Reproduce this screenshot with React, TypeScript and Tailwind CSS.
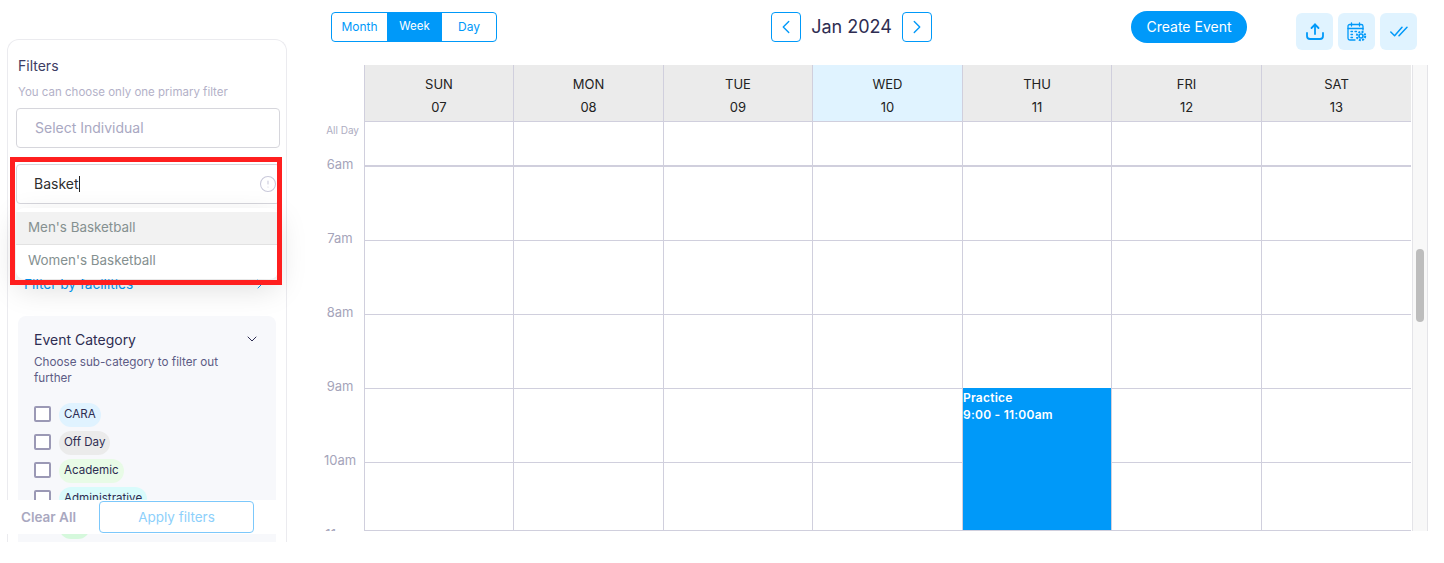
import { AlertCircle, ChevronDown, ChevronLeft, ChevronRight } from 'lucide-react';

const days = [
  { name: 'SUN', num: '07' },
  { name: 'MON', num: '08' },
  { name: 'TUE', num: '09' },
  { name: 'WED', num: '10', today: true },
  { name: 'THU', num: '11' },
  { name: 'FRI', num: '12' },
  { name: 'SAT', num: '13' },
];

const hours = ['6am', '7am', '8am', '9am', '10am', '11am'];

const categories = [
  { label: 'CARA', color: 'bg-[#e0f3ff]' },
  { label: 'Off Day', color: 'bg-[#ebebeb]' },
  { label: 'Academic', color: 'bg-[#e8fbe6]' },
  { label: 'Administrative', color: 'bg-[#d9fbfb]' },
  { label: 'Bus', color: 'bg-[#d5f8dc]' },
];

function UploadIcon() {
  return (
    <svg width="18" height="17" viewBox="0 0 18 17" fill="none" stroke="#0099f9" strokeWidth="1.8" strokeLinecap="round" strokeLinejoin="round">
      <path d="M9 11V1.5" />
      <path d="M5.5 5 9 1.5 12.5 5" />
      <path d="M1 10v3a3 3 0 0 0 3 3h10a3 3 0 0 0 3-3v-3" />
    </svg>
  );
}

function CalendarSettingsIcon() {
  return (
    <svg width="20" height="20" viewBox="0 0 20 20" fill="none" stroke="#0099f9" strokeLinecap="round" strokeLinejoin="round">
      <g strokeWidth="1.3">
        <path d="M8 18H2.8A1.8 1.8 0 0 1 1 16.2V4.3a1.8 1.8 0 0 1 1.8-1.8h11.4A1.8 1.8 0 0 1 16 4.3V8" />
        <path d="M4.5 .8v3.2M12.5 .8v3.2M1 6.5h15" />
        <path d="M4 9.5h1.5M4 12.5h1.5M4 15.5h1.5M8 9.5h1.5" />
      </g>
      <circle cx="14" cy="14" r="2" strokeWidth="1.6" />
      <circle cx="14" cy="14" r="4.2" strokeWidth="2" strokeDasharray="2 1.3" strokeLinecap="butt" />
    </svg>
  );
}

function DoubleCheckIcon() {
  return (
    <svg width="18" height="11" viewBox="0 0 18 11" fill="none" stroke="#0099f9" strokeWidth="1.5" strokeLinecap="round" strokeLinejoin="round">
      <path d="M.8 6 4.6 9.8 12 1.2" />
      <path d="M9 9.8 17 1.2" />
    </svg>
  );
}

function Sidebar() {
  return (
    <div className="relative ml-[7px] mt-[39px] h-[503px] w-[280px] shrink-0">
      <div className="h-full overflow-hidden rounded-t-xl border-x border-t border-[#ebebef] px-2">
        <div className="mt-4 px-[2px] text-sm leading-5 text-[#3d3c63]">Filters</div>
        <div className="mt-[8px] whitespace-nowrap px-[2px] text-[11.5px] leading-4 text-[#b3b1c8]">You can choose only one primary filter</div>
        <div className="mt-2 flex h-10 w-[264px] items-center rounded border border-[#d6d6dc] pl-[18px] text-sm text-[#a9a8c2]">
          Select Individual
        </div>
        <div className="mt-4 flex h-10 w-[264px] items-center justify-between rounded border border-[#d6d6dc] pl-[17px] pr-[2px] text-sm text-[#2f2f2f]">
          <span className="border-r border-[#222] leading-4">Basket</span>
          <AlertCircle size={18} strokeWidth={1.4} className="text-[#c9c9da]" />
        </div>
        <div className="mt-[70px] flex h-5 items-center justify-between pl-2 pr-[10px] text-[13.7px] text-[#0099f9]">
          <span>Filter by facilities</span>
          <ChevronRight size={16} strokeWidth={1.5} />
        </div>
        <div className="ml-[2px] mt-[22px] w-[258px] rounded-lg bg-[#f7f8fb] px-4 pb-10 pt-[14px]">
          <div className="flex items-center justify-between">
            <span className="text-sm leading-5 text-[#2e2d52]">Event Category</span>
            <ChevronDown size={16} strokeWidth={1.5} className="-translate-y-[1px] text-[#2e2d52]" />
          </div>
          <div className="mt-[4px] max-w-[195px] text-[11.7px] leading-4 text-[#5d5c85]">Choose sub-category to filter out further</div>
          <div className="mt-[17px] flex flex-col gap-1">
            {categories.map((c) => (
              <div key={c.label} className="flex h-6 items-center gap-2">
                <span className="h-4 w-[17px] -translate-y-[1px] rounded-[2px] border-2 border-[#9b99b5] bg-white" />
                <span className={`flex h-6 items-center rounded-full px-[5px] text-[11.6px] text-[#2e2d52] ${c.color}`}>{c.label}</span>
              </div>
            ))}
          </div>
        </div>
      </div>

      {/* typeahead results */}
      <div className="absolute left-[9px] top-[169px] w-[262px] rounded-lg bg-white pb-[3px] pt-[4px] text-[13.4px] text-[#859090] shadow-[0_10px_30px_rgba(0,0,0,0.13)]">
        <div className="flex h-[33px] items-center border-b border-[#e2e2e2] bg-[#f2f2f2] pb-[1px] pl-3">Men's Basketball</div>
        <div className="flex h-[31px] items-center pl-3">Women's Basketball</div>
      </div>

      {/* highlight from the screenshot */}
      <div className="pointer-events-none absolute left-[3px] top-[118px] h-[128px] w-[272px] border-[5px] border-[#ff1f1f]" />

      <div className="absolute left-[-7px] top-[461px] flex h-[34px] w-[286px] items-center bg-white">
        <span className="ml-[21px] text-[13.5px] font-semibold text-[#a9a8c0]">Clear All</span>
        <button className="ml-[23px] h-8 w-[155px] rounded border border-[#7cc8fb] text-[13.5px] text-[#8dd0fb]">Apply filters</button>
      </div>
    </div>
  );
}

function Toolbar() {
  return (
    <div className="flex h-[65px] items-start pl-[11px]">
      <div className="mt-3 flex h-[30px] w-[166px] overflow-hidden rounded border border-[#0099f9] text-xs text-[#0099f9]">
        <span className="flex w-[55px] items-center justify-center">Month</span>
        <span className="flex w-[55px] items-center justify-center bg-[#0099f9] text-[11.5px] text-white">Week</span>
        <span className="flex flex-1 items-center justify-center">Day</span>
      </div>
      <div className="ml-[274px] mt-3 flex items-center">
        <button className="flex size-[30px] items-center justify-center rounded border border-[#0099f9] text-[#0099f9]">
          <ChevronLeft size={22} strokeWidth={1.5} />
        </button>
        <span className="mx-[10px] w-[81px] text-center text-lg leading-[30px] text-[#2e2d52]">Jan 2024</span>
        <button className="flex size-[30px] items-center justify-center rounded border border-[#0099f9] text-[#0099f9]">
          <ChevronRight size={22} strokeWidth={1.5} />
        </button>
      </div>
      <button className="ml-[199px] mt-[11px] h-8 w-[116px] rounded-full bg-[#0099f9] text-sm text-white">Create Event</button>
      <div className="ml-[49px] mt-[13px] flex gap-[5px]">
        <button className="flex size-[37px] items-center justify-center rounded-md bg-[#e0f3ff]"><UploadIcon /></button>
        <button className="flex size-[37px] items-center justify-center rounded-md bg-[#e0f3ff]"><CalendarSettingsIcon /></button>
        <button className="flex size-[37px] items-center justify-center rounded-md bg-[#e0f3ff]"><DoubleCheckIcon /></button>
      </div>
    </div>
  );
}

function Calendar() {
  return (
    <div className="flex h-[466px] overflow-hidden">
      <div className="relative w-[1092px] shrink-0 overflow-hidden">
        <div className="ml-[44px] grid h-[57px] w-[1047px] grid-cols-[149px_150px_149px_150px_149px_150px_150px] border-b border-[#d0cfdd] text-[13px] leading-[23px] text-[#222]">
          {days.map((d) => (
            <div key={d.name} className={`flex flex-col items-center justify-center border-l border-[#d0cfdd] pt-[6px] ${d.today ? 'bg-[#e0f3ff]' : 'bg-[#ebebeb]'}`}>
              <span>{d.name}</span>
              <span>{d.num}</span>
            </div>
          ))}
        </div>
        <div className="flex h-[45px]">
          <div className="flex w-[44px] shrink-0 justify-end whitespace-nowrap pr-[5px] pt-[2px] text-[10px] leading-3 text-[#aeadc2]">All Day</div>
          <div className="grid w-[1047px] grid-cols-[149px_150px_149px_150px_149px_150px_150px] border-b-2 border-[#d0cfdd]">
            {days.map((d) => <div key={d.name} className="border-l border-[#d0cfdd]" />)}
          </div>
        </div>
        {hours.map((h) => (
          <div key={h} className="flex h-[74px]">
            <div className="flex w-[44px] shrink-0 -translate-y-[11px] justify-center pr-[4px] text-[13px] leading-4 text-[#a5a4ba]">{h}</div>
            <div className="grid w-[1047px] grid-cols-[149px_150px_149px_150px_149px_150px_150px] border-b border-[#d0cfdd]">
              {days.map((d) => (
                <div key={d.name} className="relative border-l border-[#d0cfdd]">
                  {h === '9am' && d.name === 'THU' && (
                    <div className="absolute inset-x-0 top-[-1px] z-10 h-[149px] bg-[#0099f9] text-xs font-semibold leading-[17px] tracking-[0.02em] text-white">
                      <div className="pt-[1px]">Practice</div>
                      <div>9:00 - 11:00am</div>
                    </div>
                  )}
                </div>
              ))}
            </div>
          </div>
        ))}
        {/* bottom edge of the scroll area */}
        <div className="absolute bottom-0 left-[44px] z-20 h-px w-[1047px] bg-[#d0cfdd]" />
      </div>
      <div className="w-4 shrink-0 border-x border-[#e4e4e8] bg-[#f8f8f8] px-[3px] pt-[184px]">
        <div className="h-[73px] w-2 rounded-full bg-[#bdbdbd]" />
      </div>
    </div>
  );
}

export default function App() {
  return (
    <div className="flex h-[563px] w-[1444px] overflow-hidden bg-white font-['Inter',sans-serif]">
      <Sidebar />
      <div className="ml-[33px] w-[1108px]">
        <Toolbar />
        <Calendar />
      </div>
    </div>
  );
}
